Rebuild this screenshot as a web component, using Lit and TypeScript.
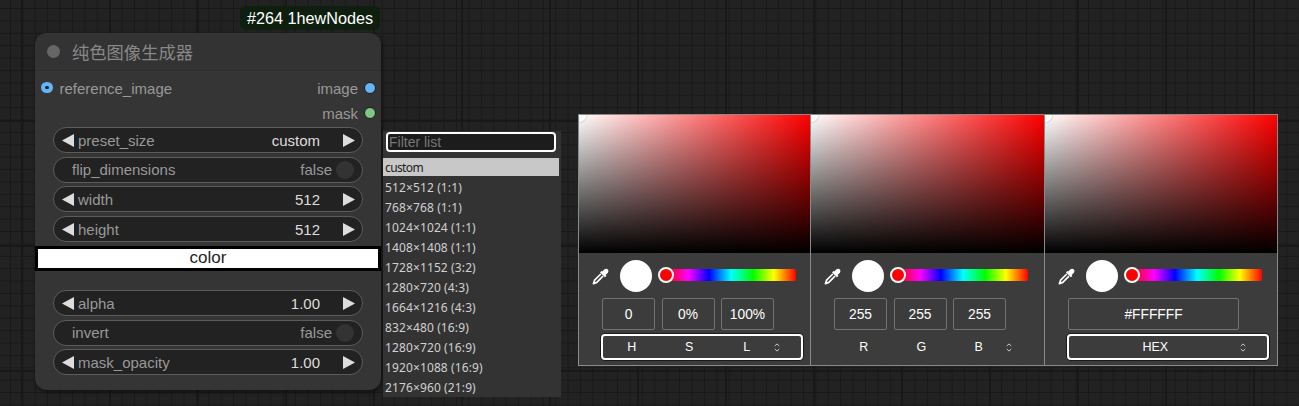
import { LitElement, html, css, svg } from 'lit';
import { customElement, property } from 'lit/decorators.js';

const presets = [
  '512×512 (1:1)',
  '768×768 (1:1)',
  '1024×1024 (1:1)',
  '1408×1408 (1:1)',
  '1728×1152 (3:2)',
  '1280×720 (4:3)',
  '1664×1216 (4:3)',
  '832×480 (16:9)',
  '1280×720 (16:9)',
  '1920×1088 (16:9)',
  '2176×960 (21:9)',
];

const arrowLeft = svg`<svg class="arrow" width="12" height="13" viewBox="0 0 12 13"><path d="M0 6.5 L12 0 V13 Z" fill="#ddd"/></svg>`;
const arrowRight = svg`<svg class="arrow" width="12" height="13" viewBox="0 0 12 13"><path d="M12 6.5 L0 0 V13 Z" fill="#ddd"/></svg>`;

const dropper = svg`<svg width="17" height="17" viewBox="0 0 17 17" fill="none">
  <path d="M10.2 3.6 L12.2 1.6 C13.2 .6 15 .6 15.8 1.6 C16.7 2.5 16.6 4 15.7 4.9 L13.6 7 L14.4 7.9 L12.9 9.3 L8 4.4 L9.4 3 Z" fill="#fff"/>
  <path d="M8.8 6 L2.6 12.2 L1.4 15.6 L4.8 14.4 L11 8.2" stroke="#fff" stroke-width="1.7" stroke-linejoin="round"/>
</svg>`;

const updown = svg`<svg width="6" height="9" viewBox="0 0 6 9" fill="none" stroke="#ccc" stroke-width="1">
  <path d="M.8 3 L3 .9 L5.2 3 M.8 6 L3 8.1 L5.2 6"/>
</svg>`;

@customElement('number-widget')
export class NumberWidget extends LitElement {
  static styles = css`
    :host {
      display: block;
    }
    .widget {
      display: flex;
      align-items: center;
      box-sizing: border-box;
      height: 26px;
      padding: 0 7px 0 8px;
      border: 1px solid #5c5c5c;
      border-radius: 13px;
      background: #222;
      font: 15px "Liberation Sans", Arial, sans-serif;
      color: #999;
    }
    .arrow {
      flex: none;
    }
    .label {
      flex: 1;
      margin-left: 4px;
    }
    .value {
      color: #ddd;
      margin-right: 23px;
    }
  `;

  @property() label = '';
  @property() value = '';

  render() {
    return html`
      <div class="widget">
        ${arrowLeft}
        <span class="label">${this.label}</span>
        <span class="value">${this.value}</span>
        ${arrowRight}
      </div>
    `;
  }
}

@customElement('toggle-widget')
export class ToggleWidget extends LitElement {
  static styles = css`
    :host {
      display: block;
    }
    .widget {
      display: flex;
      align-items: center;
      box-sizing: border-box;
      height: 26px;
      padding: 0 8px 0 18px;
      border: 1px solid #5c5c5c;
      border-radius: 13px;
      background: #222;
      font: 15px "Liberation Sans", Arial, sans-serif;
      color: #999;
    }
    .label {
      flex: 1;
    }
    .dot {
      width: 18px;
      height: 18px;
      margin-left: 4px;
      border-radius: 50%;
      background: #333;
    }
  `;

  @property() label = '';

  render() {
    return html`
      <div class="widget">
        <span class="label">${this.label}</span>
        <span>false</span>
        <span class="dot"></span>
      </div>
    `;
  }
}

@customElement('color-picker')
export class ColorPicker extends LitElement {
  static styles = css`
    :host {
      display: block;
      box-sizing: border-box;
      border-left: 1px solid #8a8a8a;
      background: #3c3c3c;
      font-family: "Liberation Sans", Arial, sans-serif;
    }
    :host([last]) {
      border-right: 1px solid #8a8a8a;
    }
    .area {
      position: relative;
      height: 138px;
      overflow: hidden;
      background: linear-gradient(to top, #000, transparent),
        linear-gradient(to right, #fff, #f00);
    }
    .handle {
      position: absolute;
      left: -7px;
      top: -7px;
      width: 14px;
      height: 14px;
      box-sizing: border-box;
      border: 2px solid #fff;
      border-radius: 50%;
      box-shadow: 0 0 2px rgba(0, 0, 0, 0.4);
    }
    .body {
      height: 112px;
      box-sizing: border-box;
      padding: 7px 0 0 23px;
    }
    .tools {
      display: flex;
      align-items: center;
      height: 32px;
    }
    .dropper {
      display: flex;
      margin-left: -10px;
      width: 24px;
    }
    .swatch {
      width: 32px;
      height: 32px;
      margin-left: 4px;
      border-radius: 50%;
      background: #fff;
    }
    .hue {
      position: relative;
      width: 130px;
      height: 12px;
      margin: 0 0 2px 14px;
      border-radius: 0 2px 2px 0;
      background: linear-gradient(to right, #f00, #f0f 17%, #00f 33%, #0ff 50%, #0f0 67%, #ff0 83%, #f00);
    }
    .thumb {
      position: absolute;
      left: -8px;
      top: -2px;
      width: 16px;
      height: 16px;
      box-sizing: border-box;
      border: 2px solid #fff;
      border-radius: 50%;
      background: #f00;
    }
    .inputs {
      display: flex;
      gap: 6.5px;
      margin-top: 6px;
    }
    .input {
      width: 53px;
      height: 32px;
      box-sizing: border-box;
      border: 1px solid #727272;
      border-radius: 2px;
      display: flex;
      align-items: center;
      justify-content: center;
      color: #fff;
      font-size: 13.8px;
    }
    .input.wide {
      width: 171px;
    }
    .mode {
      display: flex;
      align-items: center;
      width: 202px;
      height: 26px;
      margin: 4px 0 0 -1px;
      box-sizing: border-box;
      border: 2px solid transparent;
      border-radius: 4px;
      color: #fff;
      font-size: 12.5px;
    }
    .mode.focused {
      border-color: #fff;
      box-shadow: 0 0 0 1px #1a1a1a;
    }
    .cell {
      flex: none;
      width: 57.5px;
      text-align: center;
    }
    .cell.hex {
      width: 172.5px;
    }
    .updown {
      display: flex;
      margin-left: -1.5px;
    }
  `;

  @property() mode = 'hsl';

  render() {
    const hex = this.mode === 'hex';
    const labels = this.mode === 'hsl' ? ['H', 'S', 'L'] : ['R', 'G', 'B'];
    const values = this.mode === 'hsl' ? ['0', '0%', '100%'] : ['255', '255', '255'];
    return html`
      <div class="area"><div class="handle"></div></div>
      <div class="body">
        <div class="tools">
          <span class="dropper">${dropper}</span>
          <div class="swatch"></div>
          <div class="hue"><div class="thumb"></div></div>
        </div>
        <div class="inputs">
          ${hex
            ? html`<div class="input wide">#FFFFFF</div>`
            : values.map((v) => html`<div class="input">${v}</div>`)}
        </div>
        <div class="mode ${this.mode === 'rgb' ? '' : 'focused'}">
          ${hex
            ? html`<span class="cell hex">HEX</span>`
            : labels.map((l) => html`<span class="cell">${l}</span>`)}
          <span class="updown">${updown}</span>
        </div>
      </div>
    `;
  }
}

@customElement('app-root')
export class AppRoot extends LitElement {
  static styles = css`
    :host {
      display: block;
      position: relative;
      width: 1299px;
      height: 406px;
      overflow: hidden;
      background-color: #222;
      background-image:
        linear-gradient(#181818 2px, transparent 2px),
        linear-gradient(90deg, #181818 2px, transparent 2px),
        linear-gradient(#191919 1px, transparent 1px),
        linear-gradient(90deg, #191919 1px, transparent 1px);
      background-size: 125px 125px, 88px 88px, 12.4px 12.4px, 12.4px 12.4px;
      background-position: 0 120px, 21px 0, 0 8px, 10px 0;
    }
    .badge {
      position: absolute;
      left: 240px;
      top: 6px;
      height: 24px;
      padding: 0 7px;
      display: flex;
      align-items: center;
      border-radius: 6px;
      background: #0f1f0f;
      color: #fff;
      font: 16.2px "Liberation Sans", Arial, sans-serif;
    }
    .node {
      position: absolute;
      left: 35px;
      top: 33px;
      width: 346px;
      height: 357px;
      border-radius: 12px;
      background: #353535;
      box-shadow: 1px 2px 4px rgba(0, 0, 0, 0.5);
      font: 15px "Liberation Sans", Arial, sans-serif;
      color: #999;
    }
    .title {
      display: flex;
      align-items: center;
      height: 38px;
      padding-left: 12px;
      border-radius: 12px 12px 0 0;
      background: #333;
      border-bottom: 1px solid #303030;
      box-sizing: border-box;
      font: 17.3px "Noto Sans CJK SC", sans-serif;
      color: #888;
    }
    .title i {
      width: 13px;
      height: 13px;
      margin-right: 12px;
      border-radius: 50%;
      background: #666;
    }
    .slots {
      display: flex;
      justify-content: space-between;
      height: 25px;
      align-items: center;
      padding: 0 5px 0 6px;
    }
    .slots.first {
      margin-top: 5px;
    }
    .slot {
      display: flex;
      align-items: center;
      gap: 6px;
    }
    .port {
      width: 12px;
      height: 12px;
      margin-bottom: 2px;
      border-radius: 50%;
      box-sizing: border-box;
      border: 1px solid #1c1c1c;
    }
    .port.in {
      width: 11.5px;
      height: 11.5px;
      margin-right: 1px;
      border: 4px solid #64b5f6;
      background: #222;
    }
    .blue {
      background: #64b5f6;
    }
    .green {
      background: #81c784;
    }
    .widgets {
      display: flex;
      flex-direction: column;
      gap: 3.7px;
      padding: 1px 18px 0;
    }
    .color {
      margin: 4px 0 0;
      height: 25px;
      box-sizing: border-box;
      border: 3px solid #000;
      background: #fff;
      color: #222;
      text-align: center;
      font-size: 17px;
      line-height: 18px;
    }
    .lower {
      padding-top: 19px;
    }
    .dropdown {
      position: absolute;
      left: 383px;
      top: 131px;
      width: 178px;
      height: 266px;
      background: #333;
      font: 12px "Noto Sans", "Liberation Sans", sans-serif;
      color: #d0d0d0;
    }
    .filter {
      box-sizing: border-box;
      width: 170px;
      height: 20px;
      margin: 1px 0 0 3px;
      padding-left: 1px;
      border: 2px solid #fff;
      border-radius: 4px;
      background: #1c1c1c;
      color: #777;
      line-height: 16px;
      font-family: "Liberation Sans", Arial, sans-serif;
      font-size: 14px;
    }
    .rows {
      margin-top: 6px;
    }
    .row {
      height: 20px;
      line-height: 20px;
      padding-left: 2px;
      white-space: nowrap;
      letter-spacing: 0.12px;
    }
    .row.active {
      height: 18px;
      line-height: 19px;
      width: 174px;
      margin-bottom: 2px;
      background: #c8c8c8;
      color: #222;
      letter-spacing: -0.6px;
    }
    .pickers {
      position: absolute;
      left: 578px;
      top: 114px;
      display: grid;
      grid-template-columns: 232px 234px 234px;
      border-top: 1px solid #8a8a8a;
      border-bottom: 1px solid #8a8a8a;
    }
  `;

  render() {
    return html`
      <div class="badge">#264 1hewNodes</div>

      <div class="node">
        <div class="title"><i></i>纯色图像生成器</div>
        <div class="slots first">
          <div class="slot"><span class="port in"></span>reference_image</div>
          <div class="slot">image<span class="port blue"></span></div>
        </div>
        <div class="slots">
          <span></span>
          <div class="slot">mask<span class="port green"></span></div>
        </div>
        <div class="widgets">
          <number-widget label="preset_size" value="custom"></number-widget>
          <toggle-widget label="flip_dimensions"></toggle-widget>
          <number-widget label="width" value="512"></number-widget>
          <number-widget label="height" value="512"></number-widget>
        </div>
        <div class="color">color</div>
        <div class="widgets lower">
          <number-widget label="alpha" value="1.00"></number-widget>
          <toggle-widget label="invert"></toggle-widget>
          <number-widget label="mask_opacity" value="1.00"></number-widget>
        </div>
      </div>

      <div class="dropdown">
        <div class="filter">Filter list</div>
        <div class="rows">
          <div class="row active">custom</div>
          ${presets.map((p) => html`<div class="row">${p}</div>`)}
        </div>
      </div>

      <div class="pickers">
        <color-picker mode="hsl"></color-picker>
        <color-picker mode="rgb"></color-picker>
        <color-picker mode="hex" last></color-picker>
      </div>
    `;
  }
}
